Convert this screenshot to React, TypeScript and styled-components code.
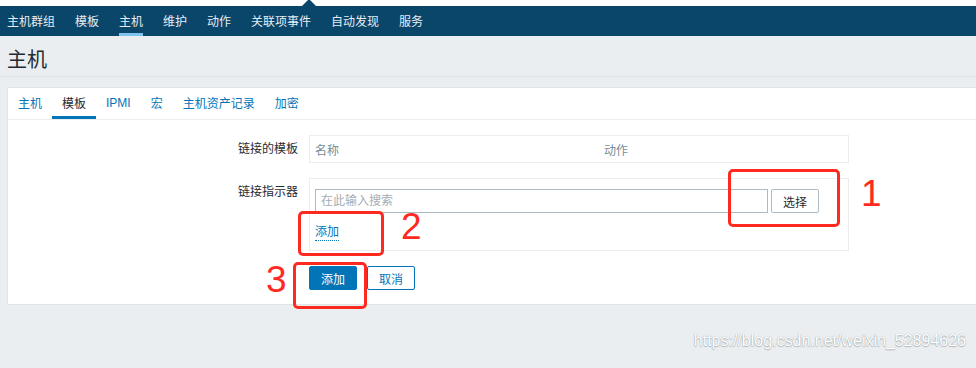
import React from 'react';
import styled, { createGlobalStyle } from 'styled-components';

const GlobalStyle = createGlobalStyle`
  html, body {
    margin: 0;
    padding: 0;
    background: #ebeef0;
  }
  body {
    font-family: "Liberation Sans", "Noto Sans CJK SC", sans-serif;
    font-size: 12px;
    color: #1f2c33;
  }
`;

const menuItems = ['主机群组', '模板', '主机', '维护', '动作', '关联项事件', '自动发现', '服务'];
const tabs = ['主机', '模板', 'IPMI', '宏', '主机资产记录', '加密'];

const App: React.FC = () => {
  return (
    <Page>
      <GlobalStyle />
      <TopStrip />
      <NavBar>
        {menuItems.map((item) => (
          <NavItem key={item} $active={item === '主机'}>
            {item}
          </NavItem>
        ))}
      </NavBar>

      <Header>
        <Title>主机</Title>
      </Header>

      <Panel>
        <TabList>
          {tabs.map((tab) => (
            <Tab key={tab} $active={tab === '模板'}>
              {tab}
            </Tab>
          ))}
        </TabList>

        <Form>
          <Label>链接的模板</Label>
          <TableBox>
            <HeadCell $width="289px">名称</HeadCell>
            <HeadCell>动作</HeadCell>
          </TableBox>

          <Label>链接指示器</Label>
          <FieldBox>
            <SearchRow>
              <SearchInput placeholder="在此输入搜索" />
              <GreyButton>选择</GreyButton>
            </SearchRow>
            <DottedLink>添加</DottedLink>
          </FieldBox>

          <span />
          <Actions>
            <PrimaryButton>添加</PrimaryButton>
            <AltButton>取消</AltButton>
          </Actions>
        </Form>
      </Panel>

      {/* red annotations drawn over the screenshot */}
      <Mark $x={728} $y={169} $w={112} $h={58} />
      <MarkNumber $x={861} $y={172}>1</MarkNumber>
      <Mark $x={298} $y={211} $w={86} $h={45} />
      <MarkNumber $x={401} $y={205}>2</MarkNumber>
      <Mark $x={293} $y={262} $w={74} $h={47} />
      <MarkNumber $x={266} $y={258}>3</MarkNumber>

      <Watermark>https://blog.csdn.net/weixin_52894626</Watermark>
    </Page>
  );
};

export default App;

const Page = styled.div`
  position: relative;
  width: 976px;
  height: 368px;
  overflow: hidden;
`;

const TopStrip = styled.div`
  position: relative;
  height: 6px;
  background: #ffffff;

  &::after {
    content: '';
    position: absolute;
    left: 302px;
    bottom: 0;
    border-left: 7px solid transparent;
    border-right: 7px solid transparent;
    border-bottom: 7px solid #0a466a;
  }
`;

const NavBar = styled.nav`
  display: flex;
  gap: 20px;
  height: 30px;
  padding-left: 7px;
  background: #0a466a;
`;

const NavItem = styled.div<{ $active?: boolean }>`
  display: flex;
  align-items: center;
  height: 30px;
  box-sizing: border-box;
  padding-top: 2px;
  color: #e6edf2;
  font-size: 12px;
  border-bottom: 3px solid ${(p) => (p.$active ? '#7ec4ef' : 'transparent')};
`;

const Header = styled.header`
  height: 41px;
  box-sizing: border-box;
  padding: 12px 7px 0;
  border-bottom: 1px solid #dce1e5;
  margin-bottom: 10px;
`;

const Title = styled.h1`
  margin: 0;
  font-size: 20px;
  line-height: 24px;
  font-weight: normal;
  color: #1f2c33;
`;

const Panel = styled.section`
  margin-left: 7px;
  width: 1000px;
  height: 218px;
  box-sizing: border-box;
  background: #ffffff;
  border: 1px solid #dfe4e7;
`;

const TabList = styled.div`
  display: flex;
  height: 31px;
  border-bottom: 1px solid #ebeef0;
`;

const Tab = styled.div<{ $active?: boolean }>`
  display: flex;
  align-items: center;
  padding: 1px 10px 0;
  height: 31px;
  box-sizing: border-box;
  color: ${(p) => (p.$active ? '#1f2c33' : '#0275b8')};
  border-bottom: 3px solid ${(p) => (p.$active ? '#0275b8' : 'transparent')};
  margin-bottom: -1px;
`;

const Form = styled.div`
  display: grid;
  grid-template-columns: 290px 540px;
  column-gap: 11px;
  row-gap: 15px;
  padding-top: 15px;
`;

const Label = styled.div`
  text-align: right;
  padding-top: 6px;
  line-height: 16px;
  color: #1f2c33;
`;

const TableBox = styled.div`
  display: flex;
  align-items: center;
  height: 28px;
  box-sizing: border-box;
  padding-left: 5px;
  border: 1px solid #ebeef0;
`;

const HeadCell = styled.div<{ $width?: string }>`
  width: ${(p) => p.$width || 'auto'};
  color: #768d99;
  padding-top: 1px;
`;

const FieldBox = styled.div`
  display: flex;
  flex-direction: column;
  height: 73px;
  box-sizing: border-box;
  padding: 10px 5px 0;
  border: 1px solid #ebeef0;
`;

const SearchRow = styled.div`
  display: flex;
  gap: 3px;
`;

const SearchInput = styled.input`
  width: 453px;
  height: 24px;
  box-sizing: border-box;
  margin: 0;
  padding: 0 5px;
  border: 1px solid #acbbc2;
  font-family: "Liberation Sans", "Noto Sans CJK SC", sans-serif;
  font-size: 12px;
  outline: none;

  &::placeholder {
    color: #a4adb3;
  }
`;

const GreyButton = styled.button`
  width: 48px;
  height: 24px;
  padding: 0;
  background: #ffffff;
  border: 1px solid #acbbc2;
  border-radius: 2px;
  color: #1f2c33;
  font-family: "Liberation Sans", "Noto Sans CJK SC", sans-serif;
  font-size: 12px;
`;

const DottedLink = styled.span`
  align-self: flex-start;
  margin-top: 12px;
  line-height: 15px;
  color: #0275b8;
  border-bottom: 1px dotted #0275b8;
`;

const Actions = styled.div`
  display: flex;
  gap: 10px;
`;

const BaseButton = styled.button`
  width: 48px;
  height: 24px;
  padding: 0;
  border-radius: 2px;
  font-family: "Liberation Sans", "Noto Sans CJK SC", sans-serif;
  font-size: 12px;
`;

const PrimaryButton = styled(BaseButton)`
  background: #0275b8;
  border: 1px solid #0275b8;
  color: #ffffff;
`;

const AltButton = styled(BaseButton)`
  background: #ffffff;
  border: 1px solid #0275b8;
  color: #0275b8;
`;

const Mark = styled.div<{ $x: number; $y: number; $w: number; $h: number }>`
  position: absolute;
  left: ${(p) => p.$x}px;
  top: ${(p) => p.$y}px;
  width: ${(p) => p.$w}px;
  height: ${(p) => p.$h}px;
  box-sizing: border-box;
  border: 3px solid #ff2a1f;
  border-radius: 5px;
`;

const MarkNumber = styled.div<{ $x: number; $y: number }>`
  position: absolute;
  left: ${(p) => p.$x}px;
  top: ${(p) => p.$y}px;
  font-family: "Liberation Sans", sans-serif;
  font-size: 37px;
  line-height: 44px;
  color: #ff2a1f;
`;

const Watermark = styled.div`
  position: absolute;
  right: 10px;
  top: 331px;
  font-family: "Liberation Sans", sans-serif;
  font-size: 16px;
  line-height: 20px;
  color: #ffffff;
  text-shadow: 0 0 1px rgba(90, 100, 110, 0.6), 0 1px 1px rgba(90, 100, 110, 0.35);
`;
